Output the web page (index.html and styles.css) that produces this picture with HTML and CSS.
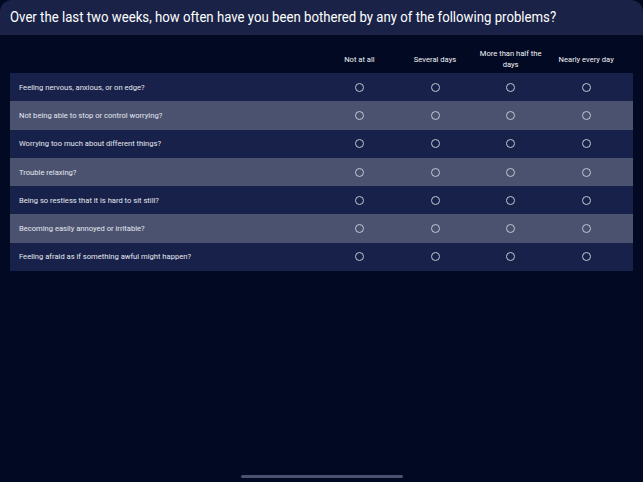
FILE: index.html
```html
<!DOCTYPE html>
<html>
<head>
    <meta charset="utf-8">
    <title>GAD-7</title>
    <link rel="stylesheet" href="styles.css">
</head>
<body>
    <div class="title-bar">
        <h1>Over the last two weeks, how often have you been bothered by any of the following problems?</h1>
    </div>

    <div class="survey">
        <div class="row head">
            <div class="question"></div>
            <div class="cell">Not at all</div>
            <div class="cell">Several days</div>
            <div class="cell">More than half the days</div>
            <div class="cell">Nearly every day</div>
        </div>

        <div class="row">
            <div class="question">Feeling nervous, anxious, or on edge?</div>
            <div class="cell"><span class="radio"></span></div>
            <div class="cell"><span class="radio"></span></div>
            <div class="cell"><span class="radio"></span></div>
            <div class="cell"><span class="radio"></span></div>
        </div>
        <div class="row alt">
            <div class="question">Not being able to stop or control worrying?</div>
            <div class="cell"><span class="radio"></span></div>
            <div class="cell"><span class="radio"></span></div>
            <div class="cell"><span class="radio"></span></div>
            <div class="cell"><span class="radio"></span></div>
        </div>
        <div class="row">
            <div class="question">Worrying too much about different things?</div>
            <div class="cell"><span class="radio"></span></div>
            <div class="cell"><span class="radio"></span></div>
            <div class="cell"><span class="radio"></span></div>
            <div class="cell"><span class="radio"></span></div>
        </div>
        <div class="row alt">
            <div class="question">Trouble relaxing?</div>
            <div class="cell"><span class="radio"></span></div>
            <div class="cell"><span class="radio"></span></div>
            <div class="cell"><span class="radio"></span></div>
            <div class="cell"><span class="radio"></span></div>
        </div>
        <div class="row">
            <div class="question">Being so restless that it is hard to sit still?</div>
            <div class="cell"><span class="radio"></span></div>
            <div class="cell"><span class="radio"></span></div>
            <div class="cell"><span class="radio"></span></div>
            <div class="cell"><span class="radio"></span></div>
        </div>
        <div class="row alt">
            <div class="question">Becoming easily annoyed or irritable?</div>
            <div class="cell"><span class="radio"></span></div>
            <div class="cell"><span class="radio"></span></div>
            <div class="cell"><span class="radio"></span></div>
            <div class="cell"><span class="radio"></span></div>
        </div>
        <div class="row">
            <div class="question">Feeling afraid as if something awful might happen?</div>
            <div class="cell"><span class="radio"></span></div>
            <div class="cell"><span class="radio"></span></div>
            <div class="cell"><span class="radio"></span></div>
            <div class="cell"><span class="radio"></span></div>
        </div>
    </div>

    <div class="home-indicator"></div>
</body>
</html>
```

FILE: styles.css
```css
html, body {
    height: 100%;
}

body {
    margin: 0;
    background-color: #020a23;
    font-family: Roboto, "Liberation Sans", sans-serif;
    color: #e6e8ef;
    display: flex;
    flex-direction: column;
    overflow: hidden;
}

.title-bar {
    background-color: #1a2347;
    border-radius: 12px 12px 0 0;
    height: 35px;
    padding: 0 10px;
    display: flex;
    align-items: center;
}

.title-bar h1 {
    margin: 0;
    font-size: 13.2px;
    font-weight: 400;
    color: #ffffff;
    transform: scaleY(1.1);
}

.survey {
    margin: 0 10px;
}

.row {
    display: flex;
    align-items: center;
    height: 28.3px;
    background-color: #172149;
}

.row.alt {
    background-color: #4a526f;
}

.row.head {
    height: 38px;
    background: none;
    color: #f2f3f7;
}

.question {
    flex: 1;
    padding-left: 9px;
    font-size: 7.6px;
}

.cell {
    width: 75.6px;
    text-align: center;
    font-size: 7.6px;
    line-height: 11px;
    display: flex;
    justify-content: center;
    align-items: center;
}

.head .cell {
    padding: 0 4px;
    box-sizing: border-box;
    margin-top: 10px;
}

.cell:last-child {
    margin-right: 9px;
}

.radio {
    width: 7px;
    height: 7px;
    border: 1px solid #c3c7d4;
    border-radius: 50%;
}

.home-indicator {
    margin: auto auto 4px;
    width: 162px;
    height: 3px;
    border-radius: 2px;
    background-color: #4a5270;
}
```
